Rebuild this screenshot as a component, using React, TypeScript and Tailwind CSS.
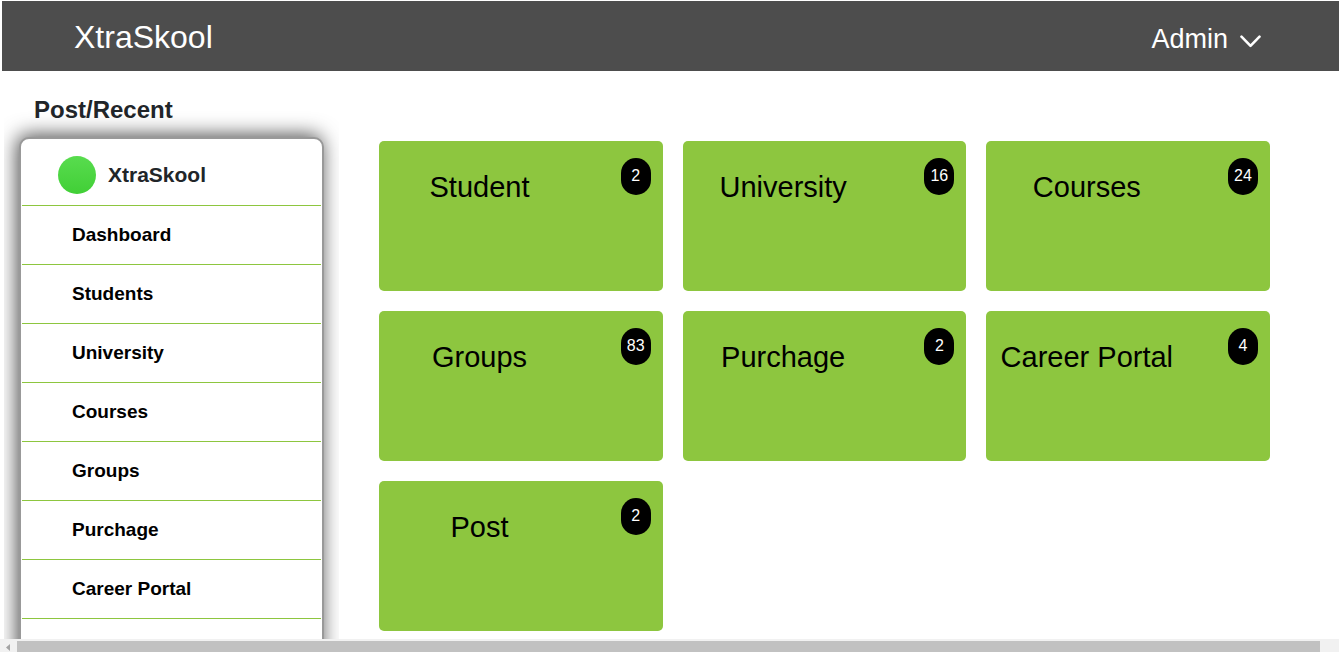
const menu = ['Dashboard', 'Students', 'University', 'Courses', 'Groups', 'Purchage', 'Career Portal'];

const cards = [
  { title: 'Student', count: 2 },
  { title: 'University', count: 16 },
  { title: 'Courses', count: 24 },
  { title: 'Groups', count: 83 },
  { title: 'Purchage', count: 2 },
  { title: 'Career Portal', count: 4 },
  { title: 'Post', count: 2 },
];

function Header() {
  return (
    <header className="mt-px ml-0.5 flex h-[70px] shrink-0 items-center justify-between bg-[#4d4d4d] pt-0.5 pr-[78px] pl-[72px] text-white">
      <a href="#home" className="text-[32px] leading-10">XtraSkool</a>
      <button type="button" className="flex items-center gap-3 pt-1 text-[27px] leading-10">
        Admin
        <svg width="21" height="13" viewBox="0 0 21 13" fill="none" stroke="currentColor" strokeWidth="2.6" strokeLinecap="round" strokeLinejoin="round" className="mt-1" aria-hidden="true">
          <path d="M1.5 1.700 10.500 10.900 19.500 1.700" />
        </svg>
      </button>
    </header>
  );
}

function Sidebar() {
  return (
    <aside className="ml-1 w-[335px] shrink-0 overflow-hidden px-[15px] pt-6">
      <h1 className="mb-3 pl-[15px] text-2xl leading-[30px] font-bold text-[#212529]">Post/Recent</h1>
      <nav aria-label="Main" className="rounded-[10px] border-2 border-[#999] bg-white px-px pb-24 shadow-[-2px_-2px_20px_rgba(0,0,0,0.7)]">
        <div className="flex h-[67px] items-center gap-3 border-b border-[#8dc63f] pt-1.5 pl-9">
          <span className="size-[38px] rounded-full bg-linear-to-b from-[#58dc4e] to-[#41cf36]" />
          <span className="text-[21px] leading-6 font-bold text-[#212529]">XtraSkool</span>
        </div>
        <ul>
          {menu.map((item) => (
            <li key={item} className="border-b border-[#8dc63f]">
              <a href="#section" className="flex h-[58px] items-center pl-[50px] text-[19px] font-bold text-black">
                {item}
              </a>
            </li>
          ))}
        </ul>
      </nav>
    </aside>
  );
}

function Card({ title, count }: { title: string; count: number }) {
  return (
    <a href="#section" className="flex h-[150px] items-start justify-between rounded-[5px] bg-[#8dc63f] pr-3 text-black">
      <h2 className="w-[201px] pt-7 text-center text-[29px] leading-9 whitespace-nowrap">{title}</h2>
      <span className="mt-[17px] flex h-[37px] w-[30px] justify-center rounded-[15px] bg-black pt-1.5 text-base text-white">
        {count}
      </span>
    </a>
  );
}

function HorizontalScrollbar() {
  return (
    <div className="flex h-[13px] shrink-0 bg-[#f1f1f1] pt-0.5 pr-[19px]" aria-hidden="true">
      <svg width="17" height="11" viewBox="0 0 17 11" className="shrink-0">
        <path d="M10 3v7L6 6.500z" fill="#a3a3a3" />
      </svg>
      <div className="flex-1 bg-[#c1c1c1]" />
    </div>
  );
}

export default function App() {
  return (
    <div className="flex h-screen flex-col bg-white font-['Liberation_Sans',Arial,sans-serif]">
      <Header />
      <div className="flex min-h-0 flex-1 overflow-hidden">
        <Sidebar />
        <main className="grid flex-1 grid-cols-3 content-start gap-5 pt-[70px] pr-[69px] pl-10">
          {cards.map((card) => (
            <Card key={card.title} {...card} />
          ))}
        </main>
      </div>
      <HorizontalScrollbar />
    </div>
  );
}
